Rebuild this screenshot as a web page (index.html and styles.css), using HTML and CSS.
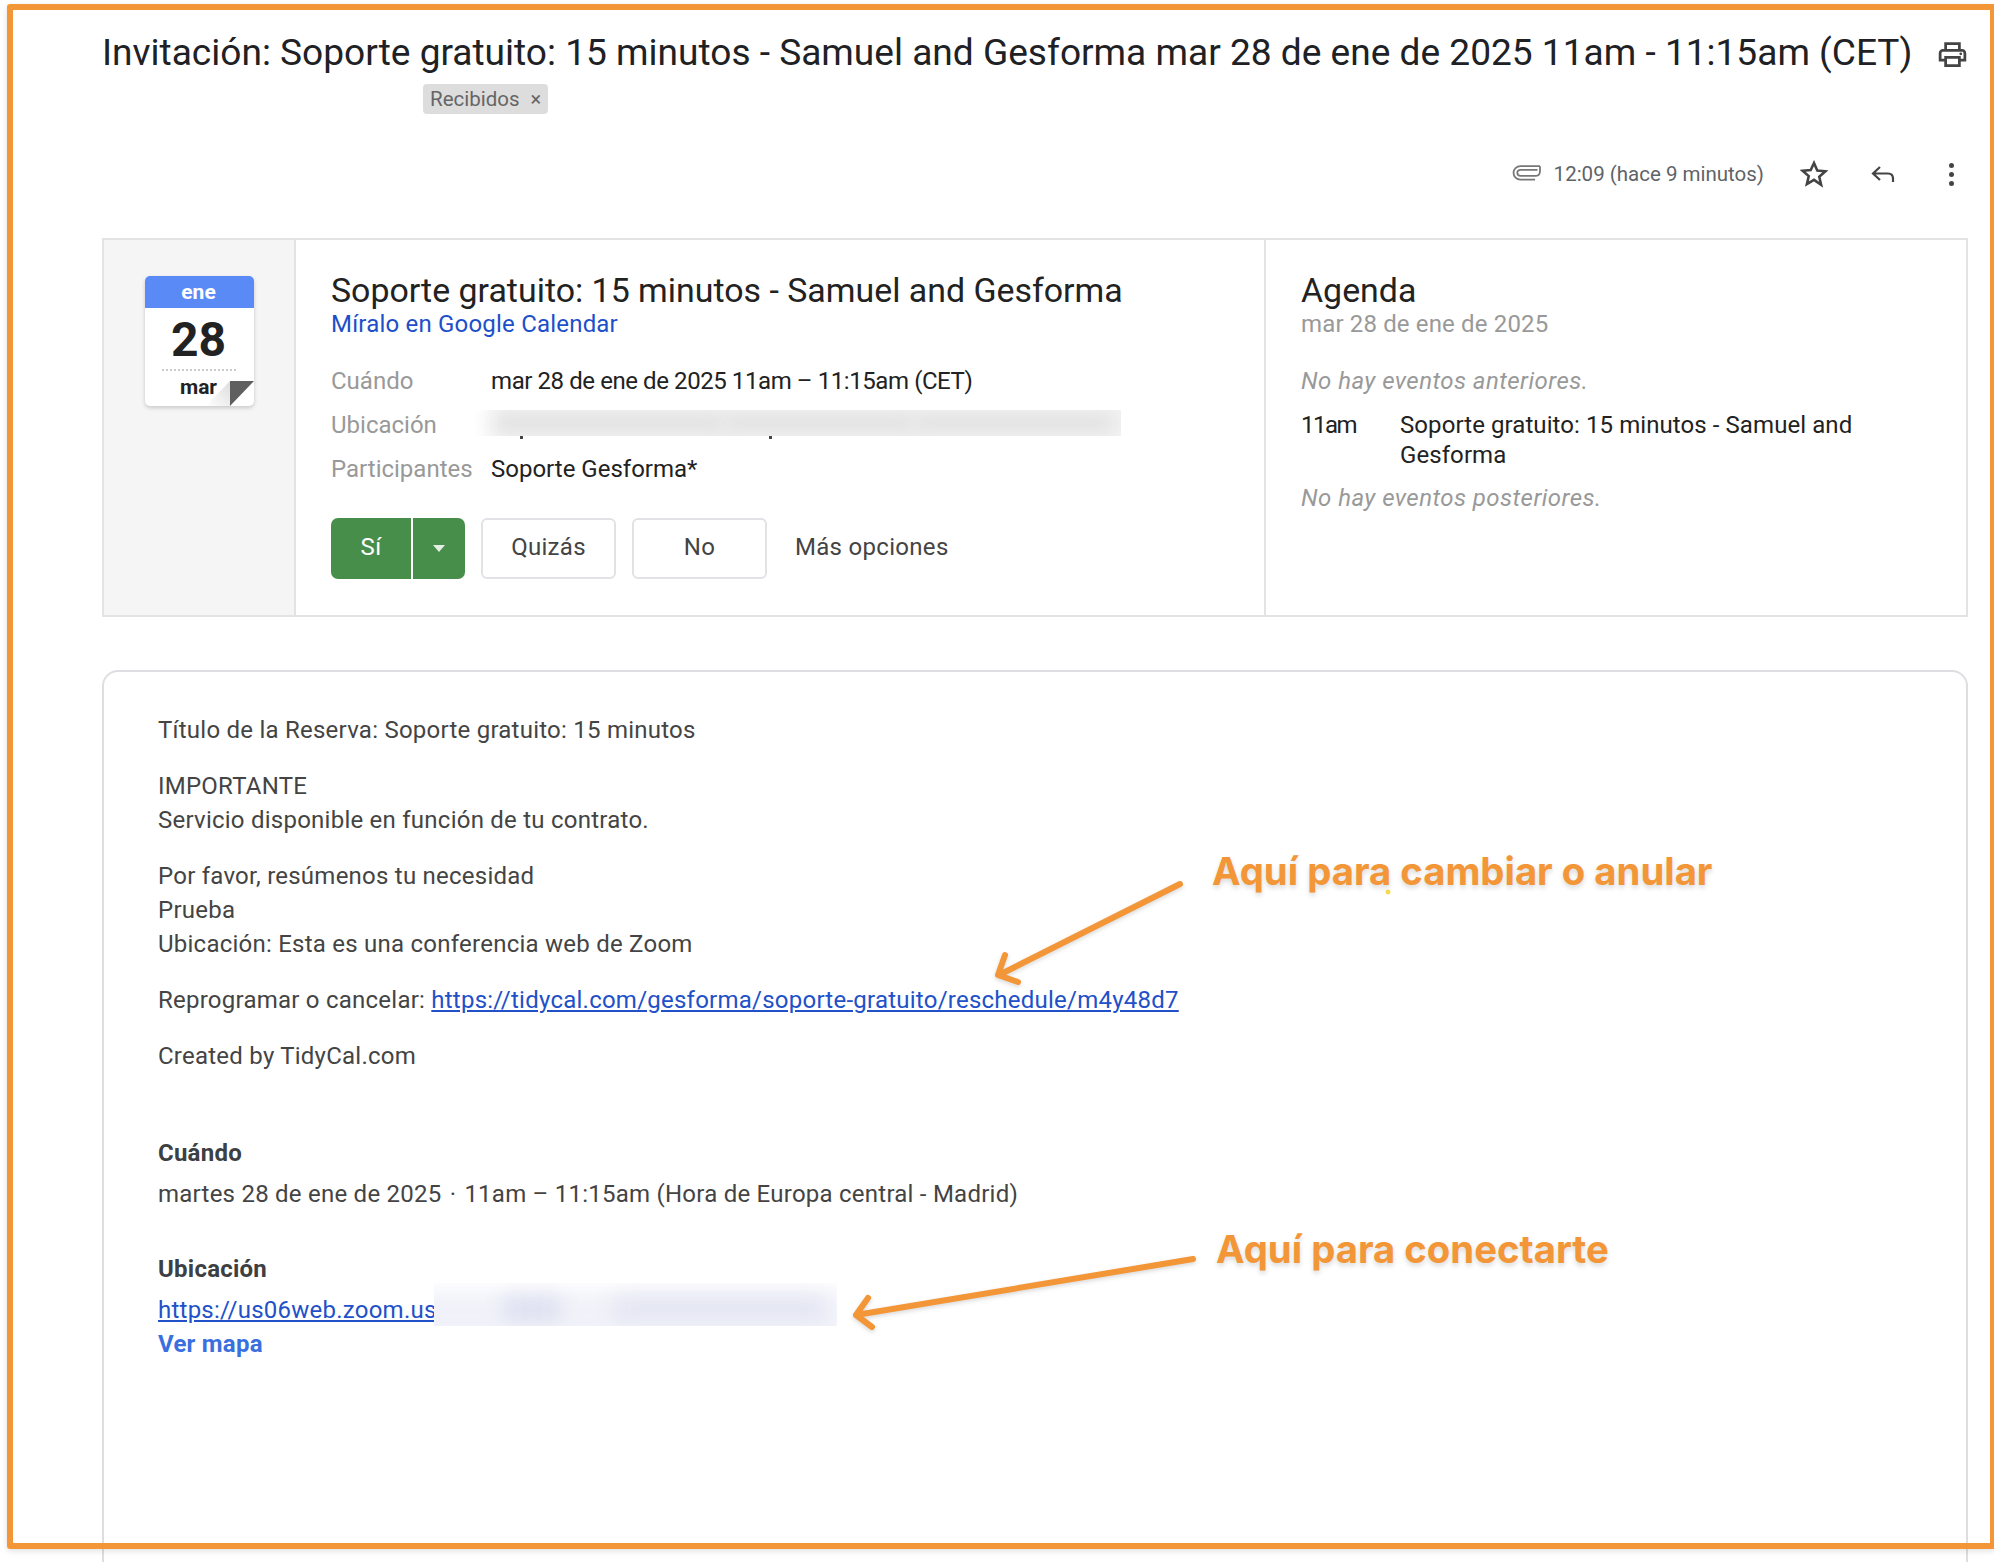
FILE: index.html
```html
<!DOCTYPE html>
<html lang="es">
<head>
<meta charset="utf-8">
<title>Invitación</title>
<link rel="stylesheet" href="styles.css">
</head>
<body>
<main class="page">
  <header class="subject">
    <div class="subject-row">
      <h1 class="subject-title">Invitación: Soporte gratuito: 15 minutos - Samuel and Gesforma mar 28 de ene de 2025 11am - 11:15am (CET)</h1>
      <svg class="icon-print" viewBox="0 0 24 24"><path d="M19 8h-1V3H6v5H5c-1.66 0-3 1.34-3 3v6h4v4h12v-4h4v-6c0-1.66-1.34-3-3-3zM8 5h8v3H8V5zm8 12v2H8v-4h8v2zm2-2v-2H6v2H4v-4c0-.55.45-1 1-1h14c.55 0 1 .45 1 1v4h-2z"/><circle cx="18" cy="11.5" r="1"/></svg>
    </div>
    <span class="chip">Recibidos <span class="chip-x">×</span></span>
  </header>

  <div class="meta">
    <svg class="icon-clip" viewBox="0 0 30 18"><path d="M28 2.2H8.5C4.6 2.2 1.5 5 1.5 8.8s3.1 6.8 7 6.8h14.5M25.500 5.800H8.800C6.800 5.800 5.300 7.100 5.300 8.800s1.500 3.100 3.500 3.100H24c2 0 4-1.500 4-4.800V2.200" fill="none" stroke="#777" stroke-width="1.8"/></svg>
    <span class="meta-time">12:09 (hace 9 minutos)</span>
    <svg class="icon-star" viewBox="0 0 24 24"><path d="M12 2.600l2.800 6.500 7 .6-5.300 4.600 1.600 6.900L12 17l-6.100 3.700 1.600-6.900-5.300-4.600 7-.6z" fill="none" stroke="#444" stroke-width="2.200" stroke-linejoin="miter"/></svg>
    <svg class="icon-reply" viewBox="0 0 24 18"><path d="M9 2L2 8.500l7 6.500M2.500 8.500H17c3 0 5 2 5 5V17" fill="none" stroke="#444" stroke-width="2.200"/></svg>
    <span class="dots"><i></i><i></i><i></i></span>
  </div>

  <section class="invite">
    <div class="invite-date">
      <div class="cal">
        <div class="cal-month">ene</div>
        <div class="cal-day">28</div>
        <div class="cal-rule"></div>
        <div class="cal-week">mar</div>
        <svg class="cal-curl" viewBox="0 0 48 25"><defs><linearGradient id="fold" x1="0" y1="1" x2="1" y2="0"><stop offset="0" stop-color="#fff"/><stop offset="1" stop-color="#ddd"/></linearGradient></defs><path d="M0 25L24 0V25z" fill="url(#fold)"/><path d="M24 0H48L24 25z" fill="#5f5f5f"/></svg>
      </div>
    </div>
    <div class="invite-main">
      <h2 class="invite-title">Soporte gratuito: 15 minutos - Samuel and Gesforma</h2>
      <a class="invite-link">Míralo en Google Calendar</a>
      <dl class="details">
        <dt>Cuándo</dt><dd class="date-value">mar 28 de ene de 2025 11am – 11:15am (CET)</dd>
        <dt>Ubicación</dt><dd class="masked"><span class="blur-loc"><i class="b1"></i><i class="b2"></i><i class="b3"></i></span><i class="tail t1"></i><i class="tail t2"></i></dd>
        <dt>Participantes</dt><dd>Soporte Gesforma*</dd>
      </dl>
      <div class="actions">
        <div class="split"><button class="btn-yes">Sí</button><button class="btn-drop"><span class="caret"></span></button></div>
        <button class="btn">Quizás</button>
        <button class="btn">No</button>
        <span class="more">Más opciones</span>
      </div>
    </div>
    <aside class="agenda">
      <h2 class="agenda-title">Agenda</h2>
      <div class="agenda-date">mar 28 de ene de 2025</div>
      <div class="agenda-none first">No hay eventos anteriores.</div>
      <div class="agenda-event"><span class="agenda-time">11am</span><span>Soporte gratuito: 15 minutos - Samuel and Gesforma</span></div>
      <div class="agenda-none">No hay eventos posteriores.</div>
    </aside>
  </section>

  <article class="body-card">
    <p>Título de la Reserva: Soporte gratuito: 15 minutos</p>
    <p>IMPORTANTE<br>Servicio disponible en función de tu contrato.</p>
    <p>Por favor, resúmenos tu necesidad<br>Prueba<br>Ubicación: Esta es una conferencia web de Zoom</p>
    <p>Reprogramar o cancelar: <a class="link">https://tidycal.com/gesforma/soporte-gratuito/reschedule/m4y48d7</a></p>
    <p>Created by TidyCal.com</p>
    <h3 class="when-head">Cuándo</h3>
    <p class="when-text">martes 28 de ene de 2025 <span class="mid">·</span> 11am – 11:15am (Hora de Europa central - Madrid)</p>
    <h3 class="where-head">Ubicación</h3>
    <div class="where-text"><a class="link">https://us06web.zoom.us</a><span class="blur-zoom"><i class="z0"></i><i class="z1"></i><i class="z2"></i></span></div>
    <a class="map-link">Ver mapa</a>
  </article>
</main>

<div class="frame"></div>
<svg class="arrows" viewBox="0 0 1994 1562">
  <g class="arrow">
    <path d="M1180 884L999 975M1005 955L998 975L1018 982"/>
    <path d="M1193 1259L856 1315M868 1298L856 1315L872 1327"/>
  </g>
  <circle cx="1388" cy="892" r="2.500" fill="#f7dc52"/>
</svg>
<div class="note note-a">Aquí para cambiar o anular</div>
<div class="note note-b">Aquí para conectarte</div>
</body>
</html>
```
FILE: styles.css
```css
* { box-sizing: border-box; }
html, body { margin: 0; height: 1562px; overflow: hidden; background: #fff; }
body { font-family: Roboto, "Liberation Sans", sans-serif; color: #222; position: relative; }
.page { padding: 33px 26px 0 102px; }

.subject-row { display: flex; align-items: center; justify-content: space-between; height: 40px; }
.subject-title { margin: 0; font-size: 37.1px; font-weight: 400; line-height: 40px; white-space: nowrap; color: #202124; }
.icon-print { width: 33px; height: 33px; fill: #444; margin-top: 2px; margin-right: -1px; flex: none; }
.chip { display: inline-flex; align-items: center; margin: 11px 0 0 321px; height: 30px; padding: 0 7px; gap: 11px; background: #ddd; border-radius: 4px; font-size: 20.5px; color: #666; }
.chip-x { font-size: 20px; }

.meta { display: flex; align-items: center; justify-content: flex-end; height: 30px; margin-top: 45px; }
.icon-clip { width: 30px; height: 18px; margin-right: 12px; margin-top: -3px; }
.meta-time { font-size: 20.5px; color: #5f6368; margin-right: 36px; }
.icon-star { width: 28px; height: 28px; margin-right: 42px; }
.icon-reply { width: 26px; height: 18px; margin-right: 53px; }
.dots { display: flex; flex-direction: column; gap: 4px; margin-right: 14px; }
.dots i { width: 5px; height: 5px; border-radius: 50%; background: #444; }

.invite { display: flex; height: 379px; margin-top: 49px; border: 2px solid #e3e3e3; }
.invite-date { width: 192px; flex: none; background: #f5f5f5; border-right: 2px solid #e3e3e3; padding: 36px 0 0 41px; }
.cal { position: relative; width: 109px; height: 130px; padding-right: 2px; background: #fff; border-radius: 5px; box-shadow: 0 2px 4px rgba(0,0,0,.18); text-align: center; overflow: hidden; }
.cal-month { height: 32px; margin-right: -2px; padding-right: 2px; background: #5a8af5; color: #fff; font-weight: 700; font-size: 21px; line-height: 32px; }
.cal-day { font-size: 48px; font-weight: 700; line-height: 58px; height: 56px; margin-top: 3px; color: #222; }
.cal-rule { width: 74px; margin: 2px 0 0 17px; border-top: 2px dotted #ccc; }
.cal-week { font-size: 21px; font-weight: 700; line-height: 24px; margin-top: 4px; color: #222; }
.cal-curl { position: absolute; right: 0; bottom: 0; width: 48px; height: 25px; }

.invite-main { width: 970px; flex: none; padding: 30px 0 0 35px; border-right: 2px solid #e3e3e3; }
.invite-title, .agenda-title { margin: 0; font-size: 33.9px; font-weight: 400; line-height: 41px; color: #222; }
.invite-link { display: block; font-size: 24px; letter-spacing: .2px; line-height: 27px; color: #1c4fc9; }
.details { display: grid; grid-template-columns: 159px 1fr; grid-auto-rows: 44px; align-items: center; margin: 21px 0 0; font-size: 24px; }
.details dt { color: #999; }
.details dd { margin: 0 0 0 1px; color: #222; }
.details .date-value { letter-spacing: -.42px; }
.details .masked { position: relative; height: 30px; margin: 0; }
.blur-loc { position: absolute; left: -16px; top: 0; width: 647px; height: 26px; overflow: hidden; background: linear-gradient(90deg, #fff, #f3f3f3 5%); }
.blur-loc i { position: absolute; top: 4px; height: 18px; background: #e0e0e0; filter: blur(9px); }
.blur-loc .b1 { left: 20px; width: 230px; }
.blur-loc .b2 { left: 250px; width: 190px; }
.blur-loc .b3 { left: 440px; width: 200px; }
.tail { position: absolute; top: 26px; width: 3px; height: 3px; background: #444; }
.t1 { left: 30px; }
.t2 { left: 279px; }

.actions { display: flex; align-items: center; margin-top: 27px; font-size: 24px; letter-spacing: .3px; }
.split { display: flex; gap: 2px; }
button { font: inherit; cursor: pointer; letter-spacing: inherit; }
.btn-yes, .btn-drop { height: 61px; border: 0; background: #488e4b; color: #fff; padding: 0 0 4px; }
.btn-yes { width: 80px; border-radius: 7px 0 0 7px; }
.btn-drop { width: 52px; padding: 0; border-radius: 0 7px 7px 0; display: flex; align-items: center; justify-content: center; }
.caret { width: 0; height: 0; border: 6px solid transparent; border-top: 7px solid #e5eee5; border-bottom: 0; }
.btn { width: 135px; height: 61px; margin-left: 16px; padding: 0 0 4px; background: #fff; border: 2px solid #e2e2e6; border-radius: 6px; color: #444; }
.more { margin-left: 28px; margin-top: -4px; color: #444; }

.agenda { flex: 1; padding: 30px 0 0 35px; }
.agenda-date { font-size: 24px; letter-spacing: .15px; line-height: 27px; color: #999; }
.agenda-none { font-size: 24px; letter-spacing: .45px; font-style: italic; color: #999; line-height: 30px; margin-top: 13px; }
.agenda-none.first { margin-top: 28px; }
.agenda-event { display: grid; grid-template-columns: 99px 1fr; font-size: 24px; letter-spacing: .08px; line-height: 30px; margin-top: 14px; color: #222; padding-right: 100px; }
.agenda-time { letter-spacing: -1.5px; }

.body-card { height: 1000px; margin-top: 53px; padding: 41px 54px 0; border: 2px solid #dedee2; border-radius: 16px 16px 0 0; font-size: 24px; letter-spacing: .24px; line-height: 34px; color: #444; }
.body-card p { margin: 0 0 22px; }
.link { color: #2150c8; text-decoration: underline; }
.body-card h3 { margin: 0; font-size: 24px; font-weight: 700; color: #3c4043; }
.body-card .when-head { padding-top: 41px; }
.body-card .when-text { margin: 7px 0 0; }
.mid { padding: 0 2px; }
.body-card .where-head { padding-top: 41px; }
.where-text { position: relative; margin-top: 7px; }
.blur-zoom { position: absolute; left: 276px; top: -10px; width: 403px; height: 43px; overflow: hidden; background: #fff; }
.blur-zoom i { position: absolute; filter: blur(10px); }
.blur-zoom .z0 { left: -20px; top: 8px; width: 430px; height: 50px; background: #f1f2f9; }
.blur-zoom .z1 { left: 70px; top: 14px; width: 56px; height: 24px; background: #dcdff0; }
.blur-zoom .z2 { left: 180px; top: 14px; width: 210px; height: 24px; background: #e3e5f2; }
.map-link { display: block; font-weight: 700; color: #3a6fe0; }

.frame { position: absolute; left: 7px; top: 4px; width: 1989px; height: 1545px; border: 6px solid #f39638; border-radius: 3px; box-shadow: 0 2px 6px rgba(0,0,0,.12); pointer-events: none; }
.arrows { position: absolute; left: 0; top: 0; width: 1994px; height: 1562px; pointer-events: none; }
.arrow path { fill: none; stroke: #f39638; stroke-width: 6; stroke-linecap: round; stroke-linejoin: round; filter: drop-shadow(0 2px 2px rgba(0,0,0,.15)); }
.note { position: absolute; font-family: Inter, Roboto, sans-serif; font-size: 38.3px; font-weight: 700; line-height: 48px; color: #f39638; text-shadow: 0 3px 5px rgba(0,0,0,.15); white-space: nowrap; }
.note-a { left: 1212px; top: 847px; }
.note-b { left: 1216px; top: 1225px; }
```
